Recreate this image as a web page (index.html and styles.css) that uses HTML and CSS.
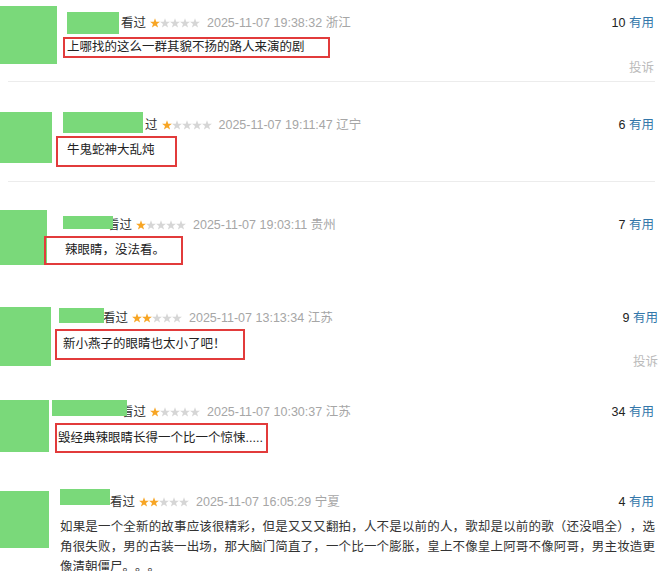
FILE: index.html
```html
<!DOCTYPE html>
<html lang="zh-CN">
	<head>
		<meta charset="UTF-8" />
		<meta name="viewport" content="width=device-width, initial-scale=1.0" />
		<title>短评</title>
		<link rel="stylesheet" href="styles.css">
	</head>

	<body>
		<svg class="defs" width="0" height="0" aria-hidden="true">
			<symbol id="star" viewBox="0 0 10 10">
				<path d="M5 .2L6.24 3.7 9.95 3.79 7 6.04 8.06 9.61 5 7.5 1.94 9.61 3 6.04 .05 3.79 3.76 3.7Z" />
			</symbol>
		</svg>

		<div class="strip s1">
			<div class="row">
				<div class="avatar"></div>
				<div class="main">
					<div class="head">
						<span class="mask"></span>
						<span class="meta">看过
							<span class="stars">
								<svg class="star on"><use href="#star" /></svg><svg class="star"><use href="#star" /></svg><svg class="star"><use href="#star" /></svg><svg class="star"><use href="#star" /></svg><svg class="star"><use href="#star" /></svg>
							</span>
							<span class="time">2025-11-07 19:38:32 浙江</span>
						</span>
						<span class="votes">10 <a>有用</a></span>
					</div>
					<p class="comment">上哪找的这么一群其貌不扬的路人来演的剧</p>
					<div class="report">投诉</div>
				</div>
			</div>
			<div class="rule"></div>
		</div>

		<div class="strip s2">
			<div class="row">
				<div class="avatar"></div>
				<div class="main">
					<div class="head">
						<span class="mask"></span>
						<span class="meta">过
							<span class="stars">
								<svg class="star on"><use href="#star" /></svg><svg class="star"><use href="#star" /></svg><svg class="star"><use href="#star" /></svg><svg class="star"><use href="#star" /></svg><svg class="star"><use href="#star" /></svg>
							</span>
							<span class="time">2025-11-07 19:11:47 辽宁</span>
						</span>
						<span class="votes">6 <a>有用</a></span>
					</div>
					<p class="comment">牛鬼蛇神大乱炖</p>
				</div>
			</div>
			<div class="rule"></div>
		</div>

		<div class="strip s3">
			<div class="row">
				<div class="avatar"></div>
				<div class="main">
					<div class="head">
						<span class="mask"></span>
						<span class="meta">看过
							<span class="stars">
								<svg class="star on"><use href="#star" /></svg><svg class="star"><use href="#star" /></svg><svg class="star"><use href="#star" /></svg><svg class="star"><use href="#star" /></svg><svg class="star"><use href="#star" /></svg>
							</span>
							<span class="time">2025-11-07 19:03:11 贵州</span>
						</span>
						<span class="votes">7 <a>有用</a></span>
					</div>
					<p class="comment">辣眼睛，没法看。</p>
				</div>
			</div>
		</div>

		<div class="strip s4">
			<div class="row">
				<div class="avatar"></div>
				<div class="main">
					<div class="head">
						<span class="mask"></span>
						<span class="meta">看过
							<span class="stars">
								<svg class="star on"><use href="#star" /></svg><svg class="star on"><use href="#star" /></svg><svg class="star"><use href="#star" /></svg><svg class="star"><use href="#star" /></svg><svg class="star"><use href="#star" /></svg>
							</span>
							<span class="time">2025-11-07 13:13:34 江苏</span>
						</span>
						<span class="votes">9 <a>有用</a></span>
					</div>
					<p class="comment">新小燕子的眼睛也太小了吧！</p>
					<div class="report">投诉</div>
				</div>
			</div>
		</div>

		<div class="strip s5">
			<div class="row">
				<div class="avatar"></div>
				<div class="main">
					<div class="head">
						<span class="mask"></span>
						<span class="meta">看过
							<span class="stars">
								<svg class="star on"><use href="#star" /></svg><svg class="star"><use href="#star" /></svg><svg class="star"><use href="#star" /></svg><svg class="star"><use href="#star" /></svg><svg class="star"><use href="#star" /></svg>
							</span>
							<span class="time">2025-11-07 10:30:37 江苏</span>
						</span>
						<span class="votes">34 <a>有用</a></span>
					</div>
					<p class="comment">毁经典辣眼睛长得一个比一个惊悚.....</p>
				</div>
			</div>
		</div>

		<div class="strip s6">
			<div class="row">
				<div class="avatar"></div>
				<div class="main">
					<div class="head">
						<span class="mask"></span>
						<span class="meta">看过
							<span class="stars">
								<svg class="star on"><use href="#star" /></svg><svg class="star on"><use href="#star" /></svg><svg class="star"><use href="#star" /></svg><svg class="star"><use href="#star" /></svg><svg class="star"><use href="#star" /></svg>
							</span>
							<span class="time">2025-11-07 16:05:29 宁夏</span>
						</span>
						<span class="votes">4 <a>有用</a></span>
					</div>
					<p class="text">如果是一个全新的故事应该很精彩，但是又又又翻拍，人不是以前的人，歌却是以前的歌（还没唱全），选角很失败，男的古装一出场，那大脑门简直了，一个比一个膨胀，皇上不像皇上阿哥不像阿哥，男主妆造更像清朝僵尸。。。</p>
				</div>
			</div>
		</div>
	</body>
</html>
```

FILE: styles.css
```css
body {
	margin: 0;
	background: #fff;
	color: #333;
	font: 12.5px/20px "Liberation Sans", "Noto Sans CJK SC", sans-serif;
}

.defs {
	display: block;
	width: 0;
	height: 0;
}

.strip {
	overflow: hidden;
}
.s1,
.s2,
.s3 {
	height: 100px;
}
.s4,
.s5 {
	height: 90px;
}
.s6 {
	height: 91px;
}

.row {
	display: flex;
	align-items: flex-start;
}

.avatar {
	flex: none;
	background: #7ad97a;
}

.main {
	flex: 1;
	min-width: 0;
	padding-right: 6px;
}

.head {
	display: flex;
	align-items: flex-start;
}

/* green block laid over the user name */
.mask {
	flex: none;
	position: relative;
	z-index: 1;
	background: #7ad97a;
}

.meta {
	display: flex;
	align-items: center;
	color: #333;
	white-space: nowrap;
}

.stars {
	display: flex;
	margin-left: 4px;
}
.star {
	width: 10px;
	height: 10px;
	fill: #d6d6d6;
}
.star.on {
	fill: #f7a524;
}

.time {
	margin-left: 7px;
	color: #a6a6a6;
}

.votes {
	margin-left: auto;
	color: #222;
	white-space: nowrap;
}
.votes a {
	color: #37a;
}

.comment {
	margin: 0;
	box-sizing: border-box;
	border: 2px solid #e23b3b;
	color: #222;
	white-space: nowrap;
}

.text {
	margin: 0;
	color: #333;
	text-align: justify;
	text-spacing-trim: space-all;
}

.report {
	text-align: right;
	color: #bbb;
}

.rule {
	height: 1px;
	margin: 0 5px 0 8px;
	background: #ececec;
}

/* strip 1 */
.s1 .avatar {
	width: 57px;
	height: 58px;
	margin-top: 6px;
}
.s1 .mask {
	width: 52px;
	height: 22px;
	margin: 12px 0 0 10px;
}
.s1 .meta,
.s1 .votes {
	margin-top: 13px;
}
.s1 .meta {
	margin-left: 2px;
}
.s1 .comment {
	width: 267px;
	height: 21px;
	margin: 3px 0 0 6px;
	padding-left: 2px;
	line-height: 17px;
}
.s1 .rule {
	margin-top: 3px;
}

/* strip 2 */
.s2 .avatar {
	width: 52px;
	height: 51px;
	margin-top: 12px;
}
.s2 .mask {
	width: 80px;
	height: 21px;
	margin: 12px 0 0 11px;
}
.s2 .meta,
.s2 .votes {
	margin-top: 15px;
}
.s2 .meta {
	margin-left: 2px;
}
.s2 .comment {
	width: 121px;
	height: 31px;
	margin: 1px 0 0 4px;
	padding: 0 0 3px 9px;
	line-height: 24px;
}
.s2 .rule {
	margin-top: 14px;
}

/* strip 3 */
.s3 .avatar {
	width: 47px;
	height: 55px;
	margin-top: 10px;
}
.s3 .mask {
	width: 50px;
	height: 13px;
	margin: 16px 0 0 16px;
}
.s3 .meta,
.s3 .votes {
	margin-top: 15px;
}
.s3 .meta {
	margin-left: -6px;
}
.s3 .comment {
	width: 139px;
	height: 29px;
	margin: 1px 0 0 -3px;
	padding: 0 0 1px 19px;
	line-height: 24px;
}

/* strip 4 */
.s4 .avatar {
	width: 51px;
	height: 59px;
	margin-top: 7px;
}
.s4 .main {
	padding-right: 2px;
}
.s4 .mask {
	width: 45px;
	height: 15px;
	margin: 8px 0 0 8px;
}
.s4 .meta,
.s4 .votes {
	margin-top: 8px;
}
.s4 .meta {
	margin-left: -1px;
}
.s4 .comment {
	width: 190px;
	height: 31px;
	margin: 1px 0 0 4px;
	padding: 0 0 1px 6px;
	line-height: 26px;
}
.s4 .report {
	margin-top: -8px;
}

/* strip 5 */
.s5 .avatar {
	width: 49px;
	height: 52px;
	margin-top: 10px;
}
.s5 .mask {
	width: 75px;
	height: 16px;
	margin: 10px 0 0 3px;
}
.s5 .meta,
.s5 .votes {
	margin-top: 12px;
}
.s5 .meta {
	margin-left: -6px;
}
.s5 .comment {
	width: 213px;
	height: 30px;
	margin: 1px 0 0 6px;
	padding-left: 1px;
	line-height: 26px;
}

/* strip 6 */
.s6 .avatar {
	width: 49px;
	height: 57px;
	margin-top: 11px;
}
.s6 .mask {
	width: 50px;
	height: 16px;
	margin: 9px 0 0 11px;
}
.s6 .meta,
.s6 .votes {
	margin-top: 12px;
}
.s6 .text {
	width: 595px;
	margin: 5px 0 0 11px;
	line-height: 20px;
}
```
